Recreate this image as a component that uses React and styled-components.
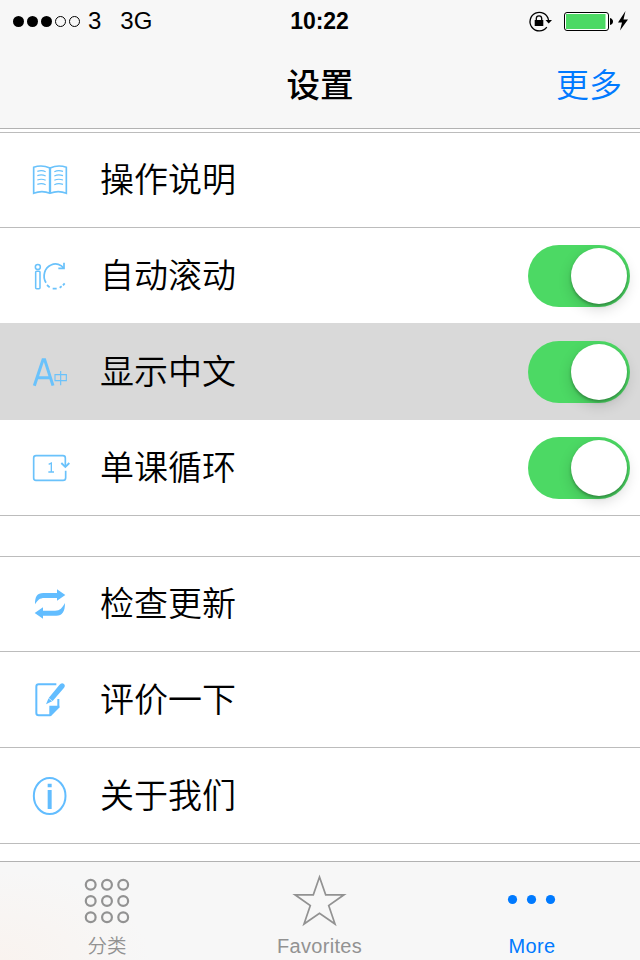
import React from 'react';
import styled, { createGlobalStyle } from 'styled-components';

const GlobalStyle = createGlobalStyle`
  * { box-sizing: border-box; }
  body {
    margin: 0;
    background: #fff;
    color: #000;
    font-family: "Liberation Sans", "Noto Sans CJK SC", sans-serif;
  }
`;

const BLUE = '#007aff';
const ICON = '#6ac2fb';

const Screen = styled.div`
  width: 640px;
  height: 960px;
  display: flex;
  flex-direction: column;
  overflow: hidden;
  background: #fff;
`;

const Header = styled.header`
  height: 129px;
  flex: none;
  background: #f7f7f7;
  border-bottom: 1px solid #b2b2b2;
`;

const StatusBar = styled.div`
  height: 40px;
  display: grid;
  grid-template-columns: 1fr auto 1fr;
  align-items: center;
  padding: 0 11px 0 12px;
  font-size: 24px;
  line-height: 42px;
`;

const Carrier = styled.div`
  display: flex;
  align-items: center;
  gap: 7px;
`;

const Network = styled.span`
  margin-left: 12px;
`;

const Clock = styled.div`
  margin-right: 2px;
  font-weight: 700;
  font-size: 23px;
  letter-spacing: -0.1px;
`;

const StatusIcons = styled.div`
  display: flex;
  justify-content: flex-end;
`;

const NavBar = styled.div`
  height: 88px;
  display: grid;
  grid-template-columns: 1fr auto 1fr;
  align-items: center;
  padding: 3px 18px 0 18px;
  font-size: 34px;
  line-height: 84px;
`;

const Title = styled.h1`
  grid-column: 2;
  margin: 0;
  font-size: 33.5px;
  font-weight: 500;
`;

const NavAction = styled.span`
  justify-self: end;
  color: ${BLUE};
  font-size: 33px;
  font-weight: 350;
`;

const Content = styled.main`
  flex: 1;
  min-height: 0;
  padding-top: 3px;
`;

const Group = styled.section`
  border-top: 1px solid #bcbcbc;

  & + & {
    margin-top: 40px;
  }
`;

const Row = styled.div`
  height: 96px;
  display: flex;
  align-items: center;
  padding: 1px 10px 0 30px;
  border-bottom: 1px solid ${(p) => (p.$edge ? '#d9d9d9' : '#bcbcbc')};
  background: ${(p) => (p.$selected ? '#d9d9d9' : '#fff')};

  &:first-child {
    height: 95px;
    padding-top: 0;
  }
`;

const Label = styled.span`
  flex: 1;
  margin-left: 30px;
  font-size: 34px;
  font-weight: 350;
  line-height: 50px;
`;

const Switch = styled.span`
  width: 102px;
  height: 62px;
  display: flex;
  justify-content: flex-end;
  padding: 3px;
  border-radius: 31px;
  background: #4cd964;
`;

const Knob = styled.span`
  width: 56px;
  height: 56px;
  border-radius: 50%;
  background: #fff;
  box-shadow: 0 5px 14px rgba(0, 0, 0, 0.16), 0 2px 3px rgba(0, 0, 0, 0.28);
`;

const TabBar = styled.nav`
  height: 99px;
  flex: none;
  display: grid;
  grid-template-columns: 214px 211px 214px;
  border-top: 1px solid #b2b2b2;
  background: radial-gradient(ellipse 150px 90px at 0 100%, #f9f3ef, #f7f7f7);
`;

const Tab = styled.div`
  display: flex;
  flex-direction: column;
  align-items: center;
  padding-top: 12px;
  color: ${(p) => (p.$active ? BLUE : '#929292')};
`;

const TabLabel = styled.span`
  font-size: ${(p) => (p.$cjk ? '19.5px' : '20px')};
  font-weight: ${(p) => (p.$cjk ? 350 : 400)};
  letter-spacing: ${(p) => (p.$cjk ? 0 : '0.3px')};
  line-height: 28px;
  margin-top: 2px;
`;

const IconSvg = styled.svg`
  display: block;
  flex: none;
  width: 40px;
  height: 40px;
  overflow: visible;
`;

const RowIcon = ({ children }) => (
  <IconSvg viewBox="30 30 120 120" fill="none" stroke={ICON} strokeWidth="6">
    {children}
  </IconSvg>
);

const icons = {
  book: (
    <RowIcon>
      <path d="M90 54Q65 43 41 52V130Q66 120 90 130Q115 120 139 130V52Q115 43 90 54Z" strokeWidth="5" />
      <path d="M90 53V130" strokeWidth="7" />
      <path
        d="M52 64Q65 59 77 65M52 77Q65 72 77 78M52 90Q65 85 77 91M52 103Q65 98 77 104M103 65Q115 59 129 64M103 78Q115 72 129 77M103 91Q115 85 129 90M103 104Q115 98 129 103"
        strokeWidth="3.6"
      />
    </RowIcon>
  ),
  scroll: (
    <RowIcon>
      <circle cx="53.5" cy="63" r="7.5" strokeWidth="4.6" />
      <rect x="47" y="76" width="13" height="52" rx="3" strokeWidth="4.6" />
      <path d="M78 110C66 91 74 65 93 57C108 50 124 55 131 67" strokeWidth="5.2" />
      <path d="M132 50V67H115" strokeWidth="5.2" />
      <path d="M81 117L89 124M98 128H110M119 125L125 121M129 118L134 112" strokeWidth="5.4" />
    </RowIcon>
  ),
  chinese: (
    <RowIcon>
      <path d="M43 131L69 53H74L99 131M53 107H90" strokeWidth="9" />
      <path d="M105 98H139V116H105ZM122 87V130" strokeWidth="3.4" />
    </RowIcon>
  ),
  loop: (
    <RowIcon>
      <path d="M136 86V60Q136 53 129 53H48Q41 53 41 60V120Q41 127 48 127H129Q137 127 137 119V98" strokeWidth="5" />
      <path d="M124 75L136 87L148 75" strokeWidth="5.6" />
      <path d="M86 79L94 75V102M85 102H102" strokeWidth="4" />
    </RowIcon>
  ),
  update: (
    <RowIcon>
      <g fill="#62bdff" stroke="none">
        <path d="M45 91C45 67 51 57 70 57H111V46L136 63L111 80V72H74C58 72 54 78 45 91Z" />
        <path d="M135 87C135 113 127 125 109 125H69V134L44 117L69 100V110H105C121 110 126 102 135 87Z" />
      </g>
    </RowIcon>
  ),
  review: (
    <RowIcon>
      <path d="M109 43H56Q49 43 49 50V129Q49 136 56 136H90L115 111V87" stroke="#62bdff" />
      <g fill="#62bdff" stroke="none">
        <path d="M88 138V107H118V112L93 138Z" />
        <path d="M78 103L86 84L118 45Q124 37 131 41Q138 46 131 55L98 93Z" />
      </g>
      <path d="M84 83L99 95" stroke="#fff" strokeWidth="2" />
    </RowIcon>
  ),
  about: (
    <RowIcon>
      <ellipse cx="89" cy="90" rx="47.5" ry="54" stroke="#62bdff" />
      <path d="M89 53V64M89 72V129" stroke="#62bdff" strokeWidth="12" />
    </RowIcon>
  ),
};

const SignalDots = () => (
  <svg width="69" height="12" viewBox="0 0 69 12">
    {[0, 1, 2, 3, 4].map((i) => (
      <circle
        key={i}
        cx={6.5 + i * 14}
        cy="6.5"
        r={i < 3 ? 5.5 : 5}
        fill={i < 3 ? '#000' : 'none'}
        stroke={i < 3 ? 'none' : '#000'}
      />
    ))}
  </svg>
);

const StatusGlyphs = () => (
  <svg width="102" height="24" viewBox="527 8 102 24">
    <path d="M546.8 26.2A9.3 9.3 0 1 1 548.5 19" fill="none" stroke="#000" strokeWidth="1.3" />
    <path d="M545.5 19H552L548.7 22.5Z" />
    <rect x="534.7" y="19" width="8.6" height="6" />
    <path d="M536.3 19.5V17.5A2.7 2.7 0 0 1 541.7 17.5V19.5" fill="none" stroke="#000" strokeWidth="1.3" />
    <rect x="564.5" y="11.5" width="44" height="18" rx="2.5" fill="#fff" stroke="#000" />
    <rect x="566" y="13" width="39.5" height="15" fill="#4cd964" />
    <path d="M610 17Q613 18 613 20.5Q613 23 610 24Z" />
    <path d="M625.5 10L618 21.5H622L620 29.5L628 18.5H623.5Z" />
  </svg>
);

const GridIcon = () => (
  <svg width="50" height="56" viewBox="82 874 50 56" fill="none" stroke="#929292" strokeWidth="2.2">
    {[884.7, 901, 917.2].map((cy) =>
      [90.7, 107, 123.2].map((cx) => <circle key={`${cx}-${cy}`} cx={cx} cy={cy} r="4.9" />)
    )}
  </svg>
);

const StarIcon = () => (
  <svg width="56" height="56" viewBox="292 874 56 56" fill="none" stroke="#929292" strokeWidth="1.7">
    <path d="M319.5 877L325.7 894.8H344L328.7 905.5L335 924L319.5 913.2L304 924L310.3 905.5L295 894.8H313.3Z" />
  </svg>
);

const MoreIcon = () => (
  <svg width="56" height="56" viewBox="504 874 56 56" fill={BLUE}>
    {[512.5, 531.5, 550.5].map((cx) => (
      <circle key={cx} cx={cx} cy="899.5" r="4.6" />
    ))}
  </svg>
);

const Toggle = () => (
  <Switch role="switch" aria-checked="true">
    <Knob />
  </Switch>
);

const groups = [
  [
    { icon: 'book', label: '操作说明' },
    { icon: 'scroll', label: '自动滚动', toggle: true, edge: true },
    { icon: 'chinese', label: '显示中文', toggle: true, selected: true, edge: true },
    { icon: 'loop', label: '单课循环', toggle: true },
  ],
  [
    { icon: 'update', label: '检查更新' },
    { icon: 'review', label: '评价一下' },
    { icon: 'about', label: '关于我们' },
  ],
];

export default function App() {
  return (
    <Screen lang="zh-CN">
      <GlobalStyle />
      <Header>
        <StatusBar>
          <Carrier>
            <SignalDots />
            <span>3</span>
            <Network>3G</Network>
          </Carrier>
          <Clock>10:22</Clock>
          <StatusIcons>
            <StatusGlyphs />
          </StatusIcons>
        </StatusBar>
        <NavBar>
          <Title>设置</Title>
          <NavAction>更多</NavAction>
        </NavBar>
      </Header>
      <Content>
        {groups.map((rows, i) => (
          <Group key={i}>
            {rows.map((row) => (
              <Row key={row.label} $selected={row.selected} $edge={row.edge}>
                {icons[row.icon]}
                <Label>{row.label}</Label>
                {row.toggle && <Toggle />}
              </Row>
            ))}
          </Group>
        ))}
      </Content>
      <TabBar>
        <Tab>
          <GridIcon />
          <TabLabel $cjk>分类</TabLabel>
        </Tab>
        <Tab>
          <StarIcon />
          <TabLabel>Favorites</TabLabel>
        </Tab>
        <Tab $active>
          <MoreIcon />
          <TabLabel>More</TabLabel>
        </Tab>
      </TabBar>
    </Screen>
  );
}
